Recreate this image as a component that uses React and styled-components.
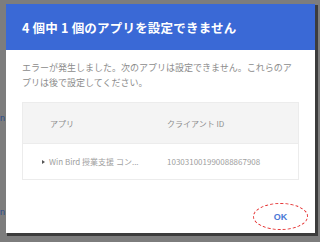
import React from "react";
import styled, { createGlobalStyle } from "styled-components";

const Global = createGlobalStyle`
  html, body { margin: 0; padding: 0; }
  body {
    width: 320px; height: 242px; overflow: hidden;
    background: #7d7d7d;
    font-family: "Noto Sans CJK JP", "Noto Sans", sans-serif;
  }
`;

const Page = styled.div`
  position: relative;
  width: 320px;
  height: 242px;
  padding: 4px 0 0 6px;
  box-sizing: border-box;
`;

const BgFragment = styled.span`
  position: absolute;
  left: 0;
  top: ${(p) => p.$top}px;
  font-size: 9px;
  color: #2b4a8a;
  font-family: "Liberation Sans", sans-serif;
`;

const Dialog = styled.div`
  width: 309px;
  height: 229px;
  background: #fff;
  box-shadow: 2px 2px 0 1px #3c3c3c;
  display: flex;
  flex-direction: column;
  position: relative;
`;

const Header = styled.div`
  flex-shrink: 0;
  height: 46px;
  background: #3a69d6;
  display: flex;
  align-items: center;
  padding-left: 16px;
  color: #fff;
  font-size: 12.5px;
  font-weight: 700;
  letter-spacing: 0.2px;
`;

const Body = styled.div`
  flex-shrink: 0;
  padding: 10px 16px 0 16px;
  color: #8c8c8c;
  font-size: 9px;
  line-height: 15px;
`;

const Table = styled.div`
  flex-shrink: 0;
  margin: 12px 16px 0 16px;
  border: 1px solid #ececec;
  display: flex;
  flex-direction: column;
`;

const Row = styled.div`
  display: grid;
  grid-template-columns: 144px 1fr;
  align-items: center;
  height: ${(p) => p.$h}px;
  background: ${(p) => (p.$head ? "#f4f4f4" : "#fff")};
  border-bottom: ${(p) => (p.$head ? "1px solid #ececec" : "none")};
  font-size: 8px;
  color: ${(p) => (p.$head ? "#8e8e8e" : "#a0a0a0")};
`;

const Cell = styled.div`
  padding-left: ${(p) => p.$pl}px;
  white-space: nowrap;
  overflow: hidden;
  display: flex;
  align-items: center;
  gap: 4px;
`;

const Caret = styled.span`
  width: 0;
  height: 0;
  border-top: 2.5px solid transparent;
  border-bottom: 2.5px solid transparent;
  border-left: 3px solid #555;
`;

const Footer = styled.div`
  flex: 1;
  display: flex;
  justify-content: flex-end;
  align-items: center;
  padding: 0 7px 0 0;
`;

const OkButton = styled.button`
  position: relative;
  width: 55px;
  height: 27px;
  border: none;
  background: none;
  color: #4a78d6;
  font-weight: 700;
  font-size: 9px;
  font-family: "Liberation Sans", sans-serif;
  padding: 0;
  margin-top: 20px;
`;

const Ring = styled.span`
  position: absolute;
  inset: 0;
  border: 1.5px dashed #e53030;
  border-radius: 50%;
`;

export default function App() {
  return (
    <>
      <Global />
      <Page>
        <BgFragment $top={113}>n</BgFragment>
        <BgFragment $top={207}>n</BgFragment>
        <Dialog>
          <Header>4 個中 1 個のアプリを設定できません</Header>
          <Body>
            エラーが発生しました。次のアプリは設定できません。これらのアプリは後で設定してください。
          </Body>
          <Table>
            <Row $head $h={40}>
              <Cell $pl={27}>アプリ</Cell>
              <Cell $pl={0}>クライアント ID</Cell>
            </Row>
            <Row $h={35}>
              <Cell $pl={19}>
                <Caret />
                Win Bird 授業支援 コン...
              </Cell>
              <Cell $pl={0}>103031001990088867908</Cell>
            </Row>
          </Table>
          <Footer>
            <OkButton>
              <Ring />
              OK
            </OkButton>
          </Footer>
        </Dialog>
      </Page>
    </>
  );
}
